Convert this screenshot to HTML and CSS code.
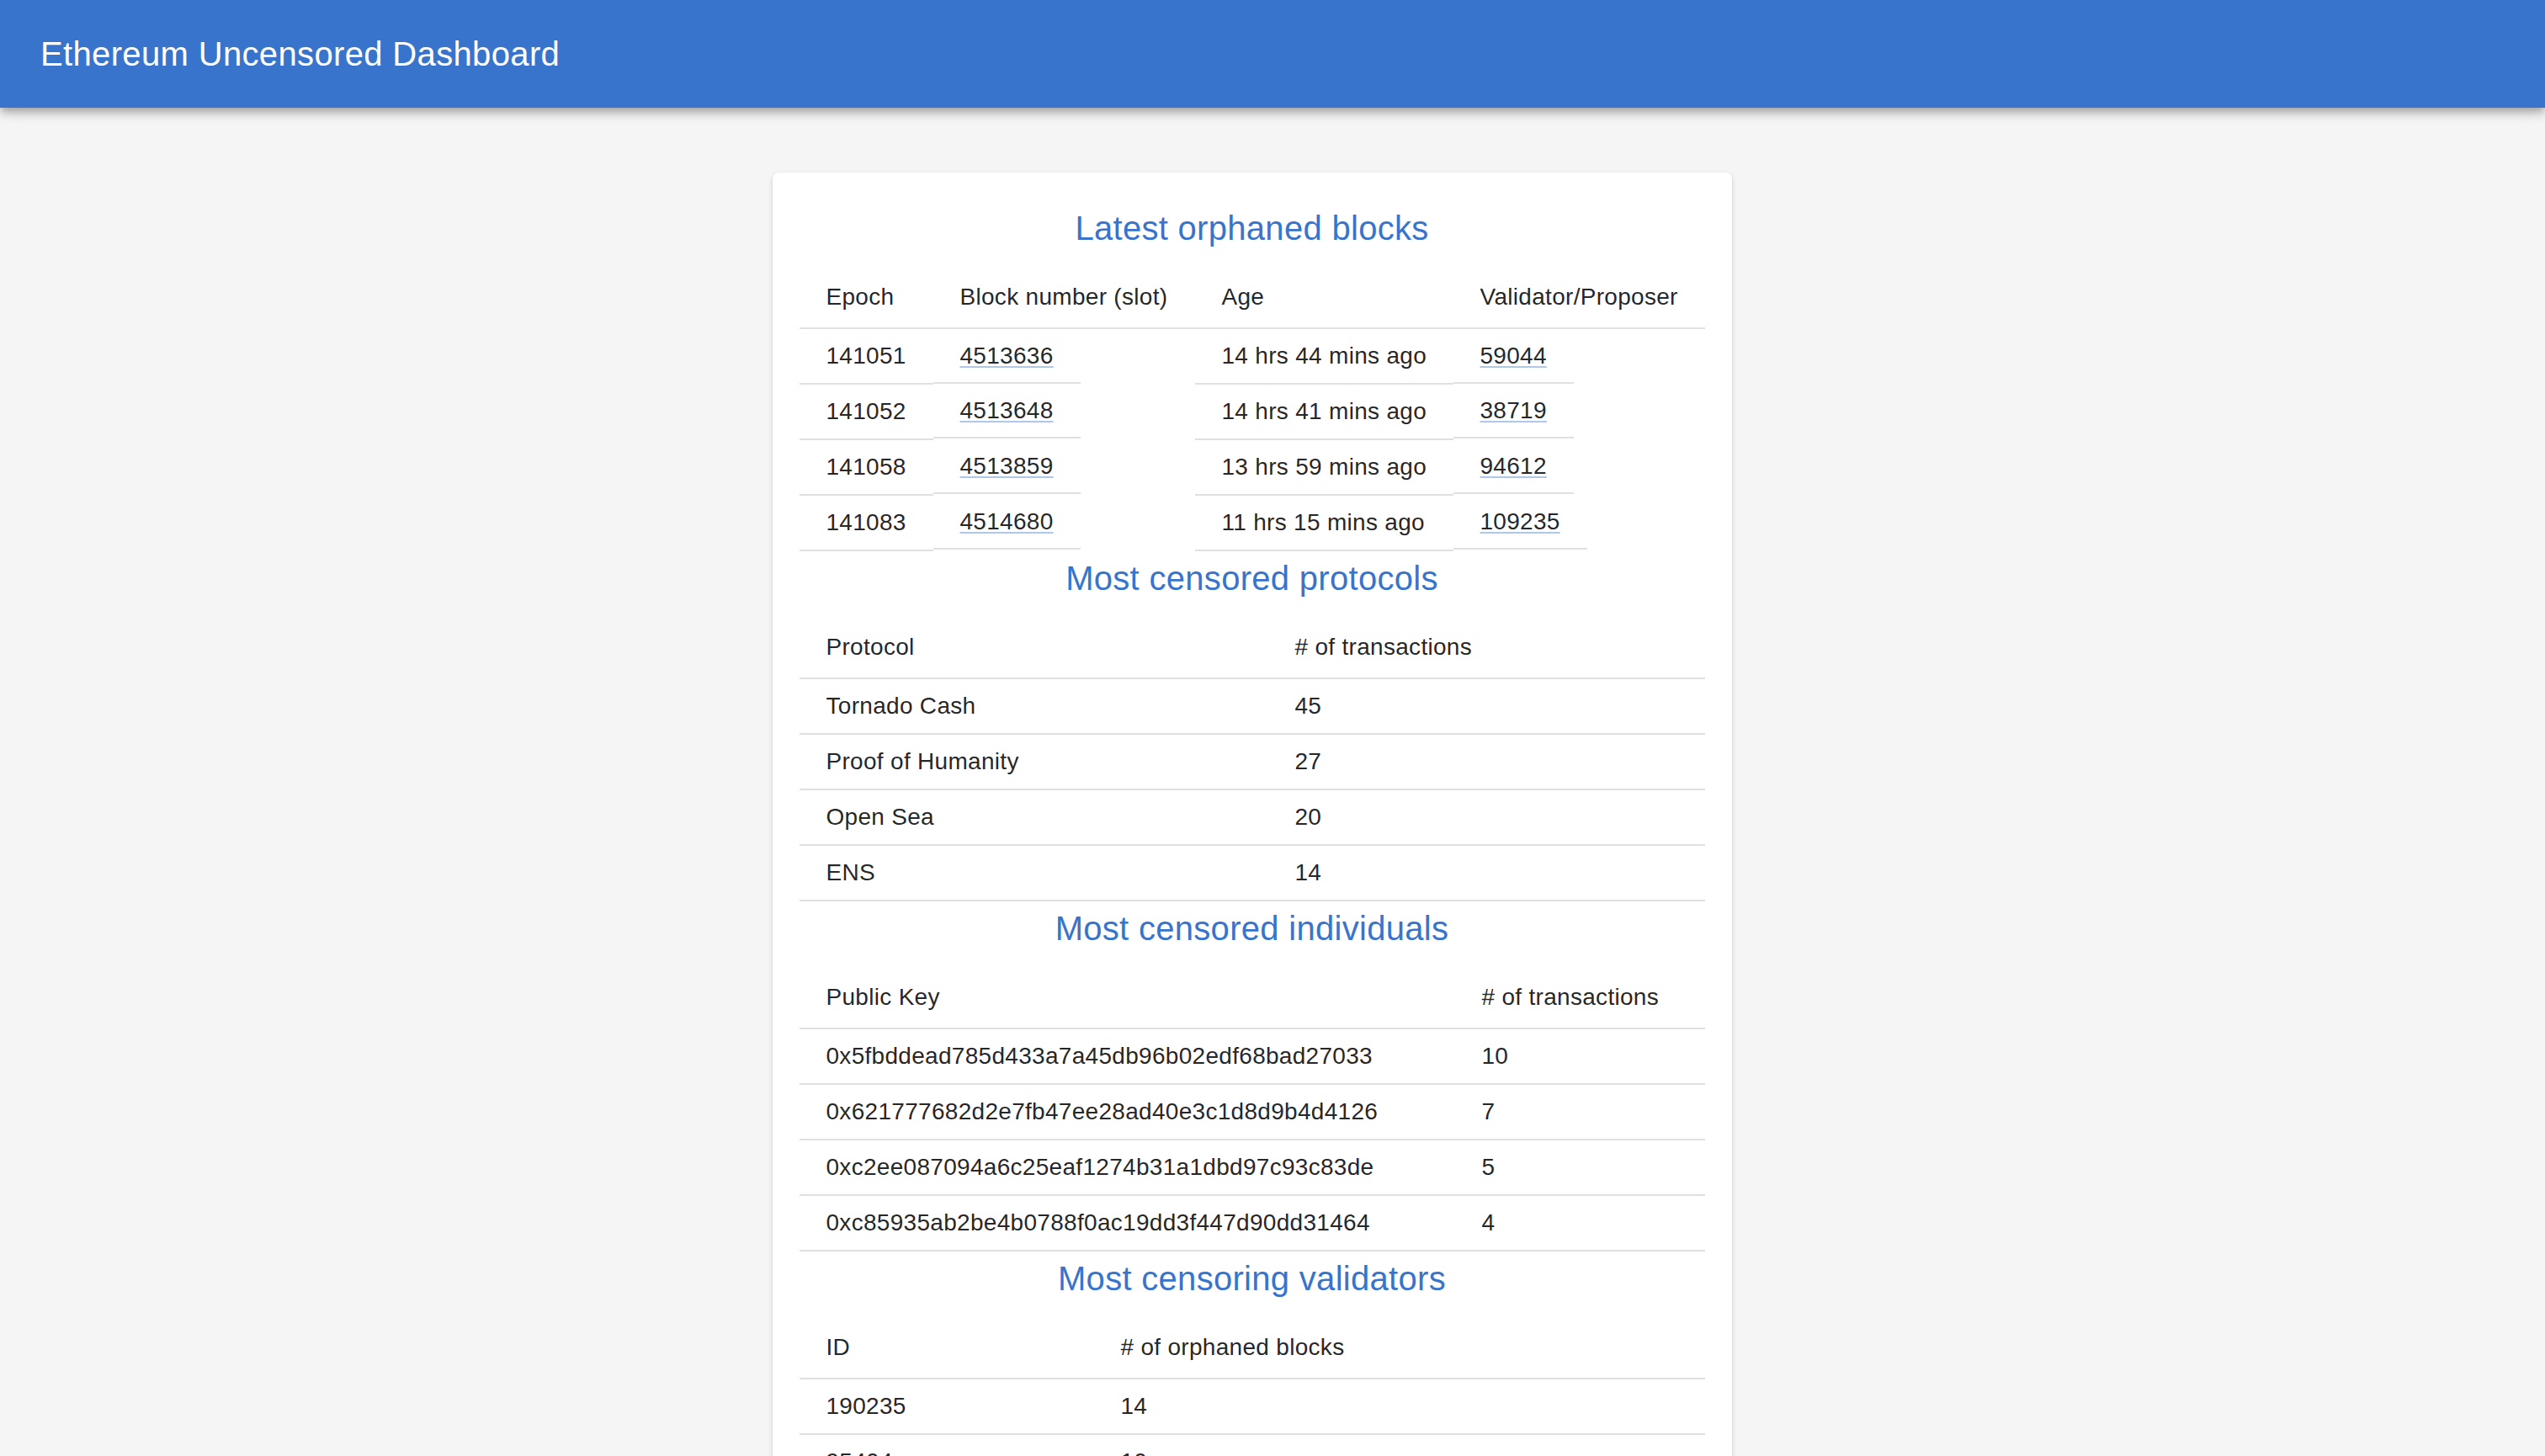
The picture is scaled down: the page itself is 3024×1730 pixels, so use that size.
FILE: index.html
```html
<!DOCTYPE html>
<html lang="en">
<head>
<meta charset="utf-8">
<title>Ethereum Uncensored Dashboard</title>
<link rel="stylesheet" href="styles.css">
</head>
<body>
<header class="appbar">
  <div class="toolbar">
    <h1 class="app-title">Ethereum Uncensored Dashboard</h1>
  </div>
</header>
<main class="page">
  <section class="card">
    <h2 class="section-title">Latest orphaned blocks</h2>
    <table class="data orphaned">
      <colgroup><col class="c1"><col class="c2"><col class="c3"><col class="c4"></colgroup>
      <thead>
        <tr><th>Epoch</th><th>Block number (slot)</th><th>Age</th><th>Validator/Proposer</th></tr>
      </thead>
      <tbody>
        <tr><td>141051</td><td class="linkcell"><span class="cellbox"><a href="#">4513636</a></span></td><td>14 hrs 44 mins ago</td><td class="linkcell"><span class="cellbox"><a href="#">59044</a></span></td></tr>
        <tr><td>141052</td><td class="linkcell"><span class="cellbox"><a href="#">4513648</a></span></td><td>14 hrs 41 mins ago</td><td class="linkcell"><span class="cellbox"><a href="#">38719</a></span></td></tr>
        <tr><td>141058</td><td class="linkcell"><span class="cellbox"><a href="#">4513859</a></span></td><td>13 hrs 59 mins ago</td><td class="linkcell"><span class="cellbox"><a href="#">94612</a></span></td></tr>
        <tr><td>141083</td><td class="linkcell"><span class="cellbox"><a href="#">4514680</a></span></td><td>11 hrs 15 mins ago</td><td class="linkcell"><span class="cellbox"><a href="#">109235</a></span></td></tr>
      </tbody>
    </table>

    <h2 class="section-title">Most censored protocols</h2>
    <table class="data protocols">
      <colgroup><col class="c1"><col></colgroup>
      <thead><tr><th>Protocol</th><th># of transactions</th></tr></thead>
      <tbody>
        <tr><td>Tornado Cash</td><td>45</td></tr>
        <tr><td>Proof of Humanity</td><td>27</td></tr>
        <tr><td>Open Sea</td><td>20</td></tr>
        <tr><td>ENS</td><td>14</td></tr>
      </tbody>
    </table>

    <h2 class="section-title">Most censored individuals</h2>
    <table class="data individuals">
      <colgroup><col class="c1"><col></colgroup>
      <thead><tr><th>Public Key</th><th># of transactions</th></tr></thead>
      <tbody>
        <tr><td>0x5fbddead785d433a7a45db96b02edf68bad27033</td><td>10</td></tr>
        <tr><td>0x621777682d2e7fb47ee28ad40e3c1d8d9b4d4126</td><td>7</td></tr>
        <tr><td>0xc2ee087094a6c25eaf1274b31a1dbd97c93c83de</td><td>5</td></tr>
        <tr><td>0xc85935ab2be4b0788f0ac19dd3f447d90dd31464</td><td>4</td></tr>
      </tbody>
    </table>

    <h2 class="section-title">Most censoring validators</h2>
    <table class="data validators">
      <colgroup><col class="c1"><col></colgroup>
      <thead><tr><th>ID</th><th># of orphaned blocks</th></tr></thead>
      <tbody>
        <tr><td>190235</td><td>14</td></tr>
        <tr><td>95404</td><td>10</td></tr>
        <tr><td>59044</td><td>8</td></tr>
        <tr><td>38719</td><td>6</td></tr>
      </tbody>
    </table>
  </section>
</main>
</body>
</html>
```

FILE: styles.css
```css
* { box-sizing: border-box; }

html, body {
  margin: 0;
  padding: 0;
  background: #f5f5f5;
  font-family: "Liberation Sans", Arial, Helvetica, sans-serif;
  color: rgba(0, 0, 0, 0.87);
}

body { overflow: hidden; }

.appbar {
  position: relative;
  z-index: 2;
  background: #3874cb;
  color: #ffffff;
  box-shadow: 0 4px 8px -2px rgba(0,0,0,0.2), 0 8px 10px 0 rgba(0,0,0,0.14), 0 2px 20px 0 rgba(0,0,0,0.12);
}

.toolbar {
  height: 128px;
  display: flex;
  align-items: center;
  padding: 0 48px;
}

.app-title {
  margin: 0;
  font-size: 40px;
  font-weight: 400;
  line-height: 64px;
  letter-spacing: 0.35px;
}

.page {
  display: flex;
  justify-content: center;
  padding: 77px 49px 0 0;
}

.card {
  width: 1140px;
  background: #ffffff;
  border-radius: 8px;
  padding: 34px 32px 32px;
  box-shadow: 0 4px 2px -2px rgba(0,0,0,0.2), 0 2px 2px 0 rgba(0,0,0,0.14), 0 2px 6px 0 rgba(0,0,0,0.12);
}

.section-title {
  margin: 0 0 14px;
  text-align: center;
  color: #3874cb;
  font-size: 40px;
  font-weight: 400;
  line-height: 64px;
  letter-spacing: 0.3px;
}

.data {
  width: 100%;
  border-collapse: collapse;
  table-layout: fixed;
  font-size: 28px;
  letter-spacing: 0.3px;
}

.data th,
.data td {
  text-align: left;
  padding: 12px 32px;
  border-bottom: 2px solid #e0e0e0;
  white-space: nowrap;
  vertical-align: middle;
}

.data th {
  font-weight: 400;
  line-height: 48px;
}

.data td {
  line-height: 40px;
}

.orphaned .c1 { width: 159px; }
.orphaned .c2 { width: 311px; }
.orphaned .c3 { width: 307px; }

.protocols .c1 { width: 557px; }
.individuals .c1 { width: 779px; }
.validators .c1 { width: 350px; }

.data td.linkcell {
  padding: 0;
  border-bottom: none;
  vertical-align: top;
}

.cellbox {
  display: inline-block;
  padding: 12px 32px 11px;
  line-height: 40px;
  border-bottom: 2px solid #e0e0e0;
}

.cellbox a {
  color: rgba(0, 0, 0, 0.87);
  text-decoration: underline;
  text-decoration-color: rgba(56, 116, 203, 0.4);
  text-decoration-thickness: 2px;
  text-underline-offset: 3px;
}
```
